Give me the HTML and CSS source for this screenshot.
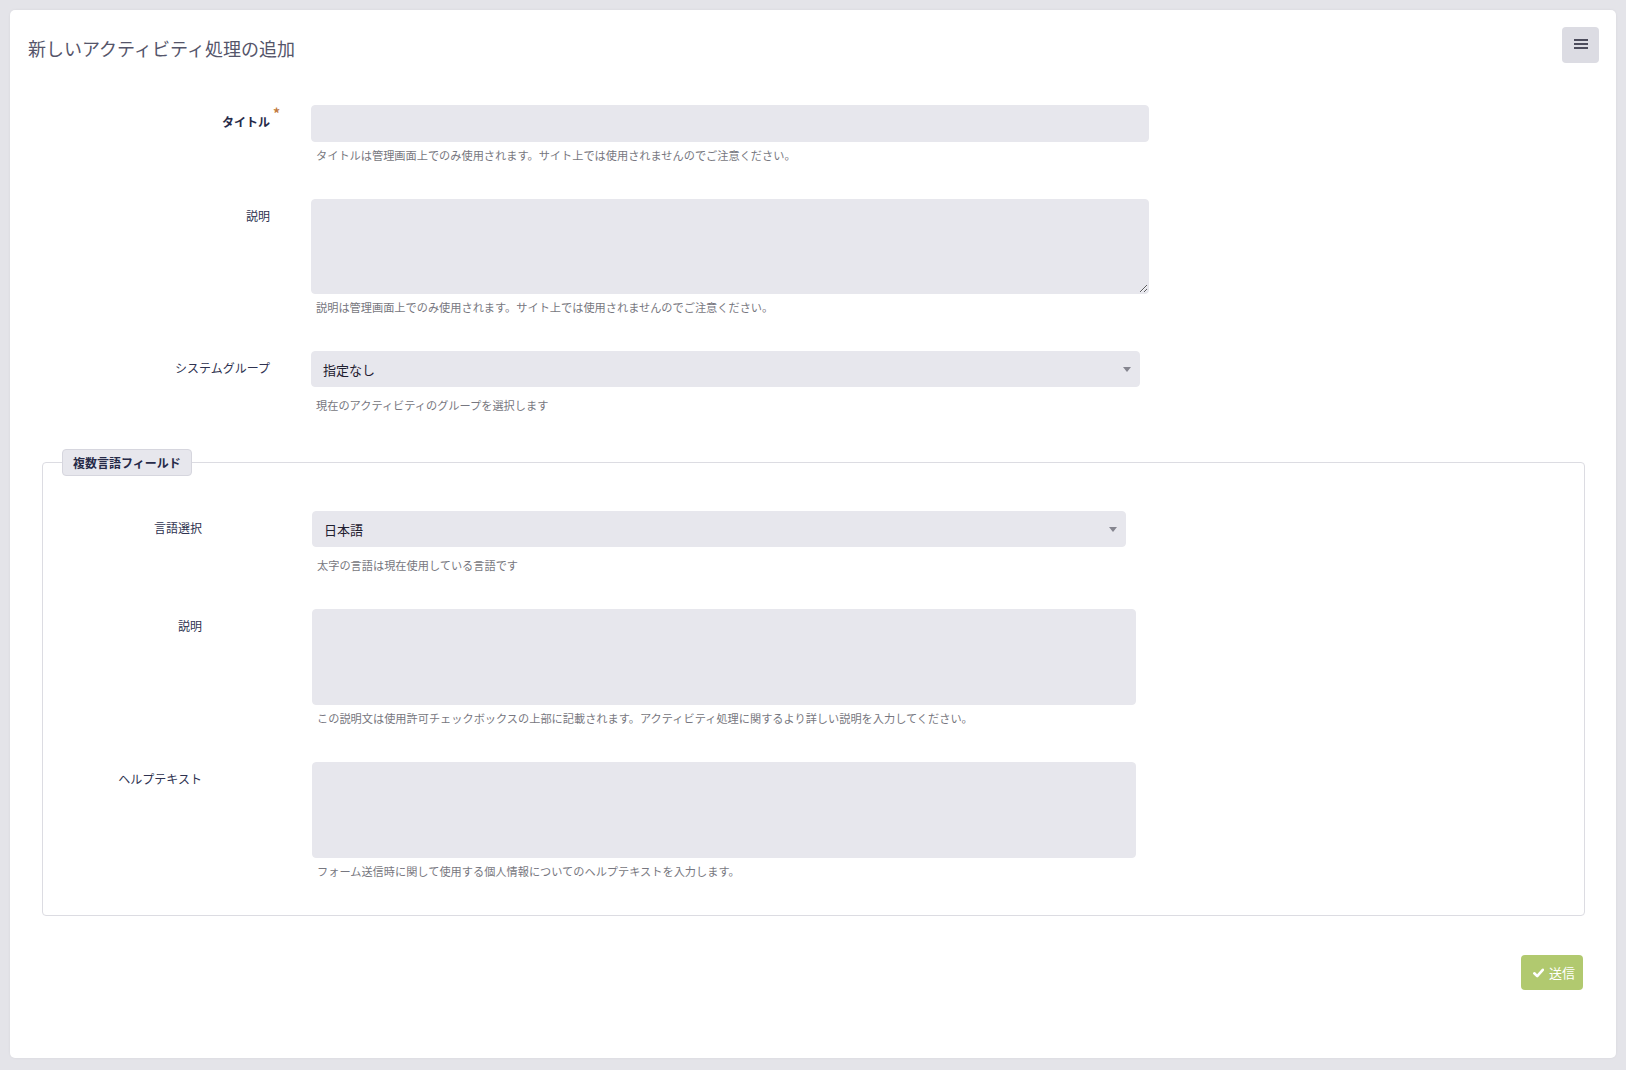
FILE: index.html
```html
<!DOCTYPE html>
<html lang="ja">
<head>
<meta charset="utf-8">
<title>新しいアクティビティ処理の追加</title>
<link rel="stylesheet" href="styles.css">
</head>
<body>
<div class="card">
  <div class="card-header">
    <h1 class="page-title">新しいアクティビティ処理の追加</h1>
    <button class="menu-btn" type="button" aria-label="menu">
      <svg width="14" height="10" viewBox="0 0 14 10"><rect x="0" y="0" width="14" height="2" fill="#4c4c5c"/><rect x="0" y="4" width="14" height="2" fill="#4c4c5c"/><rect x="0" y="8" width="14" height="2" fill="#4c4c5c"/></svg>
    </button>
  </div>

  <form class="form-main">
    <div class="row">
      <label class="lbl lbl-bold"><span class="req">タイトル<span class="star">*</span></span></label>
      <div class="ctl">
        <input class="input w-main" type="text">
        <p class="help">タイトルは管理画面上でのみ使用されます。サイト上では使用されませんのでご注意ください。</p>
      </div>
    </div>

    <div class="row">
      <label class="lbl">説明</label>
      <div class="ctl">
        <textarea class="textarea w-main resizable"></textarea>
        <p class="help">説明は管理画面上でのみ使用されます。サイト上では使用されませんのでご注意ください。</p>
      </div>
    </div>

    <div class="row">
      <label class="lbl">システムグループ</label>
      <div class="ctl">
        <div class="select w-select"><span>指定なし</span><i class="caret"></i></div>
        <p class="help">現在のアクティビティのグループを選択します</p>
      </div>
    </div>

    <fieldset class="fs">
      <legend class="fs-legend">複数言語フィールド</legend>

      <div class="row fs-row">
        <label class="lbl">言語選択</label>
        <div class="ctl">
          <div class="select w-fs-select"><span>日本語</span><i class="caret"></i></div>
          <p class="help">太字の言語は現在使用している言語です</p>
        </div>
      </div>

      <div class="row fs-row">
        <label class="lbl">説明</label>
        <div class="ctl">
          <textarea class="textarea w-fs"></textarea>
          <p class="help">この説明文は使用許可チェックボックスの上部に記載されます。アクティビティ処理に関するより詳しい説明を入力してください。</p>
        </div>
      </div>

      <div class="row fs-row">
        <label class="lbl">ヘルプテキスト</label>
        <div class="ctl">
          <textarea class="textarea w-fs"></textarea>
          <p class="help">フォーム送信時に関して使用する個人情報についてのヘルプテキストを入力します。</p>
        </div>
      </div>
    </fieldset>

    <div class="actions">
      <button class="submit" type="button">
        <svg width="11" height="10" viewBox="0 0 11 10"><path d="M1.3 5.3 L4.2 8.1 L9.8 1.8" fill="none" stroke="#fff" stroke-width="2.6" stroke-linecap="round" stroke-linejoin="round"/></svg>
        <span>送信</span>
      </button>
    </div>
  </form>
</div>
</body>
</html>
```

FILE: styles.css
```css
* { box-sizing: border-box; }

html, body {
  margin: 0;
  padding: 0;
  height: 1070px;
  overflow: hidden;
  background: #e4e4e9;
  font-family: "Noto Sans CJK JP", "Noto Sans", sans-serif;
}

.card {
  margin: 10px 10px 0 10px;
  height: 1048px;
  background: #ffffff;
  border-radius: 5px;
  box-shadow: 0 0 3px rgba(0, 0, 0, 0.06);
  padding: 17px 17px 0 18px;
}

.card-header {
  display: flex;
  justify-content: space-between;
  align-items: flex-start;
}

.page-title {
  margin: 9px 0 0 0;
  font-size: 18px;
  line-height: 24px;
  font-weight: 400;
  color: #55556a;
}

.menu-btn {
  width: 37px;
  height: 36px;
  border: none;
  border-radius: 4px;
  background: #dcdce3;
  display: flex;
  align-items: center;
  justify-content: center;
  padding: 0 0 3px 0;
}

.form-main {
  margin-top: 42px;
}

.row {
  display: flex;
  margin-bottom: 36px;
}

.lbl {
  flex: none;
  width: 242px;
  text-align: right;
  padding-top: 9px;
  font-size: 12px;
  line-height: 16px;
  color: #2e3250;
}

.lbl-bold {
  font-weight: 700;
  color: #262a48;
}

.req {
  position: relative;
}

.star {
  position: absolute;
  right: -10px;
  top: -8px;
  font-size: 14px;
  font-weight: 700;
  color: #c27b3f;
}

.ctl {
  margin-left: 41px;
}

.input,
.textarea,
.select {
  display: block;
  background: #e7e7ed;
  border: 1px solid #e7e7ed;
  border-radius: 4px;
  font-family: inherit;
  font-size: 13px;
  color: #222;
  outline: none;
  margin: 0;
}

.input { height: 37px; }

.textarea {
  height: 96px;
  resize: none;
}

.textarea.resizable {
  height: 95px;
  resize: both;
}

.select {
  height: 36px;
  display: flex;
  align-items: center;
  justify-content: space-between;
  padding: 0 8px 0 11px;
  margin-bottom: 10px;
  color: #1f2030;
}

.caret {
  width: 0;
  height: 0;
  border-left: 4px solid transparent;
  border-right: 4px solid transparent;
  border-top: 5px solid #85858f;
}

.w-main { width: 838px; }
.w-select { width: 829px; }
.w-fs-select { width: 814px; }
.w-fs { width: 824px; }

.help {
  margin: 5px 0 0 0;
  padding-left: 5px;
  font-size: 11.2px;
  line-height: 16px;
  color: #777780;
}

.fs {
  margin: 0 14px 0 14px;
  padding: 35px 0 0 0;
  border: 1px solid #dcdce2;
  border-radius: 4px;
}

.fs-legend {
  margin-left: 19px;
  padding: 4px 10px;
  background: #e7e7ed;
  border: 1px solid #d6d6de;
  border-radius: 4px;
  font-size: 12px;
  line-height: 17px;
  font-weight: 700;
  color: #262a48;
}

.fs-row .lbl { width: 159px; }
.fs-row .ctl { margin-left: 110px; }

.actions {
  display: flex;
  justify-content: flex-end;
  margin-top: 39px;
  padding-right: 16px;
}

.submit {
  height: 35px;
  width: 62px;
  border: none;
  border-radius: 4px;
  background: #b1c96f;
  color: #ffffff;
  font-family: inherit;
  font-size: 13px;
  display: flex;
  align-items: center;
  padding: 0 0 0 12px;
  gap: 5px;
}
```
